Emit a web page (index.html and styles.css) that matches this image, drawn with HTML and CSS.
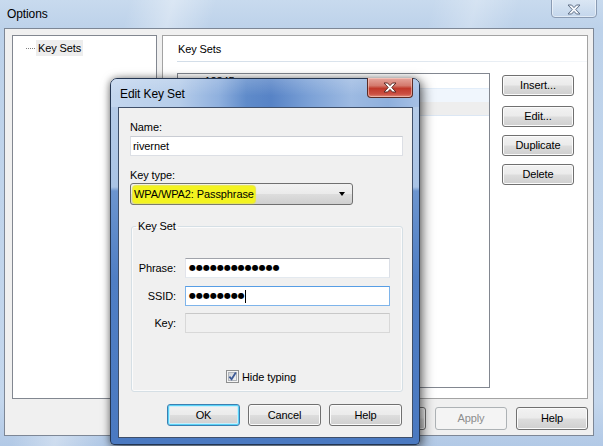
FILE: index.html
```html
<!DOCTYPE html>
<html>
<head>
<meta charset="utf-8">
<title>Options</title>
<link rel="stylesheet" href="styles.css">
</head>
<body>
<div class="win">
  <div class="win-title">
    <span class="win-caption">Options</span>
    <div class="cap-close cap-close-inactive">
      <svg width="14" height="11" viewBox="0 0 14 11"><path d="M1 1 H4.6 L7 3.6 L9.4 1 H13 L8.8 5.5 L13 10 H9.4 L7 7.4 L4.6 10 H1 L5.2 5.5 Z" fill="#f4f7fb" stroke="#5f6f86" stroke-width="1" stroke-linejoin="round"/></svg>
    </div>
  </div>
  <div class="win-body">
    <div class="client">
      <div class="panes">
        <div class="tree">
          <div class="tree-item"><span class="tree-dots"></span><span class="tree-label">Key Sets</span></div>
        </div>
        <div class="page">
          <div class="page-head">Key Sets</div>
          <div class="page-rule"></div>
          <div class="page-main">
            <div class="listbox">
              <div class="lrow">wep-12345</div>
              <div class="lrow lrow-hover"></div>
              <div class="lrow lrow-sel"></div>
            </div>
            <div class="side-btns">
              <button class="btn side-btn first">Insert...</button>
              <button class="btn side-btn">Edit...</button>
              <button class="btn side-btn">Duplicate</button>
              <button class="btn side-btn">Delete</button>
            </div>
          </div>
        </div>
      </div>
      <div class="footer">
        <button class="btn foot-btn" aria-label="OK"></button>
        <button class="btn foot-btn" aria-label="Cancel"></button>
        <button class="btn foot-btn btn-disabled">Apply</button>
        <button class="btn foot-btn">Help</button>
      </div>
    </div>
  </div>
</div>

<div class="dlg">
  <div class="dlg-title">
    <span class="dlg-caption">Edit Key Set</span>
    <div class="cap-close cap-close-red">
      <svg width="14" height="11" viewBox="0 0 14 11"><path d="M1 1 H4.6 L7 3.6 L9.4 1 H13 L8.8 5.5 L13 10 H9.4 L7 7.4 L4.6 10 H1 L5.2 5.5 Z" fill="#ffffff" stroke="#5a2a26" stroke-width="1" stroke-linejoin="round"/></svg>
    </div>
  </div>
  <div class="dlg-body">
    <div class="dlg-client">
      <div class="lbl">Name:</div>
      <div class="field field-name">rivernet</div>
      <div class="lbl lbl-gap">Key type:</div>
      <div class="combo">
        <span class="marker">WPA/WPA2: Passphrase</span>
        <span class="combo-arrow"></span>
      </div>
      <fieldset class="group">
        <legend class="group-legend">Key Set</legend>
        <div class="frow frow-first">
          <span class="flabel">Phrase:</span>
          <div class="field field-pw"><span class="dots">●●●●●●●●●●●●●</span></div>
        </div>
        <div class="frow">
          <span class="flabel">SSID:</span>
          <div class="field field-pw field-focus"><span class="dots">●●●●●●●●</span><span class="caret"></span></div>
        </div>
        <div class="frow">
          <span class="flabel">Key:</span>
          <div class="field field-pw field-disabled"></div>
        </div>
        <div class="check-row">
          <svg class="checkbox" width="13" height="13" viewBox="0 0 13 13">
            <defs><linearGradient id="cbg" x1="0" y1="0" x2="1" y2="1"><stop offset="0" stop-color="#cbcfd5"/><stop offset="1" stop-color="#f6f6f6"/></linearGradient></defs>
            <rect x="0.5" y="0.5" width="12" height="12" fill="#f4f4f4" stroke="#8e8f8f"/>
            <rect x="2.5" y="2.5" width="8" height="8" fill="url(#cbg)" stroke="#b1b5bb"/>
            <path d="M3.4 6.6 L5.6 9.3 L9.8 2.6" fill="none" stroke="#3d5a96" stroke-width="1.8"/>
          </svg>
          <span class="check-text">Hide typing</span>
        </div>
      </fieldset>
      <div class="dlg-footer">
        <button class="btn dlg-btn btn-default">OK</button>
        <button class="btn dlg-btn">Cancel</button>
        <button class="btn dlg-btn">Help</button>
      </div>
    </div>
  </div>
</div>
</body>
</html>
```

FILE: styles.css
```css
* { box-sizing: border-box; }

html, body {
  margin: 0;
  padding: 0;
  width: 603px;
  height: 446px;
  overflow: hidden;
}

body {
  position: relative;
  font-family: "Liberation Sans", Arial, sans-serif;
  font-size: 11px;
  letter-spacing: -0.1px;
  color: #000;
  background: #c3d6ec;
}

/* ---------- Options window ---------- */
.win {
  width: 603px;
  height: 446px;
  display: flex;
  flex-direction: column;
  background:
    linear-gradient(105deg, rgba(255,255,255,0) 18%, rgba(255,255,255,0.35) 24%, rgba(255,255,255,0) 30%, rgba(255,255,255,0) 60%, rgba(255,255,255,0.25) 66%, rgba(255,255,255,0) 72%),
    linear-gradient(to bottom, #c8daee 0, #bdd2ea 28px, #c4d7ed 400px, #b2c9e6 446px);
}

.win-title {
  height: 28px;
  display: flex;
  justify-content: space-between;
  align-items: flex-start;
  padding-left: 7px;
  padding-right: 6px;
}

.win-caption {
  margin-top: 6px;
  line-height: 16px;
  font-size: 12px;
}

.cap-close {
  width: 46px;
  height: 20px;
  margin-top: -2px;
  border-radius: 0 0 4px 4px;
  display: flex;
  align-items: center;
  justify-content: center;
}

.cap-close-inactive {
  border: 1px solid #8a9bb3;
  background: linear-gradient(to bottom, rgba(255,255,255,0.35), rgba(200,216,236,0.35));
  box-shadow: inset 0 0 0 1px rgba(255,255,255,0.5);
  padding-top: 2px;
}

.win-body {
  flex: 1;
  display: flex;
  padding: 0 9px 10px 4px;
}

.client {
  flex: 1;
  display: flex;
  flex-direction: column;
  border: 1px solid #7d8796;
  background: #f0f0f0;
  padding: 6px 5px 0 7px;
}

.panes {
  height: 364px;
  display: flex;
  gap: 5px;
}

.tree {
  width: 145px;
  border: 1px solid #828790;
  background: #fff;
}

.tree-item {
  margin-top: 4px;
  padding-left: 13px;
  display: flex;
  align-items: center;
  height: 16px;
}

.tree-dots {
  width: 10px;
  height: 1px;
  background: repeating-linear-gradient(to right, #7f7f7f 0 1px, transparent 1px 2px);
}

.tree-label {
  background: #ededed;
  padding: 0 2px;
  line-height: 16px;
  height: 16px;
}

.page {
  flex: 1;
  border: 1px solid #a3a3a3;
  background: #fff;
  display: flex;
  flex-direction: column;
}

.page-head {
  margin: 5px 0 0 15px;
  line-height: 16px;
  height: 16px;
}

.page-rule {
  margin: 4px 0 0 14px;
  height: 1px;
  background: linear-gradient(to right, #d2dde8, #dfe7ef 60%, #f4f7fa);
}

.page-main {
  margin: 11px 0 0 14px;
  display: flex;
}

.listbox {
  width: 313px;
  height: 315px;
  border: 1px solid #828790;
  background: #fff;
}

.lrow {
  height: 14px;
  line-height: 14px;
  padding-left: 3px;
}

.lrow-hover {
  background: #f0f6fd;
  border-top: 1px solid #e2edf9;
}

.lrow-sel {
  background: #eeeeee;
  border-bottom: 1px solid #dce7f4;
}

.side-btns {
  margin: 2px 0 0 12px;
  display: flex;
  flex-direction: column;
  gap: 8px;
}

.side-btn {
  width: 72px;
  height: 21px;
}

.side-btn.first {
  margin-bottom: 2px;
}

.footer {
  margin-top: 8px;
  display: flex;
  justify-content: flex-end;
  gap: 9px;
}

.foot-btn {
  width: 72px;
  height: 23px;
}

/* ---------- Buttons ---------- */
.btn {
  font-family: inherit;
  font-size: 11px;
  letter-spacing: inherit;
  color: #000;
  padding: 0;
  border: 1px solid #707070;
  border-radius: 3px;
  background: linear-gradient(to bottom, #f2f2f2 0%, #ebebeb 48%, #dddddd 52%, #cfcfcf 100%);
  box-shadow: inset 0 0 0 1px #fbfbfb;
  line-height: 1;
}

.btn-disabled {
  border-color: #adb2b5;
  background: #f4f4f4;
  box-shadow: none;
  color: #8d8d8d;
}

.btn-default {
  border-color: #3c7fb1;
  box-shadow: inset 0 0 0 1px #59d2f7, inset 0 0 0 2px #c9eefb;
}

/* ---------- Edit Key Set dialog ---------- */
.dlg {
  position: absolute;
  left: 110px;
  top: 78px;
  width: 310px;
  height: 367px;
  border: 1px solid #243652;
  border-radius: 7px 7px 4px 4px;
  display: flex;
  flex-direction: column;
  background: linear-gradient(to bottom, #b9cee9 0, #a9c3e5 108px, #6c95cf 112px, #4f7ec4 200px, #4a79c1 100%);
  box-shadow: 3px 3px 12px rgba(0,0,0,0.55), -1px 0 6px rgba(0,0,0,0.3);
}

.dlg-title {
  height: 28px;
  display: flex;
  justify-content: space-between;
  align-items: flex-start;
  padding-left: 9px;
  padding-right: 6px;
  border-radius: 6px 6px 0 0;
  background:
    linear-gradient(to bottom, rgba(255,255,255,0.18), rgba(255,255,255,0) 60%),
    linear-gradient(to right, #c3d6ee 0%, #b6cdea 22%, #8fb0de 35%, #5f8bca 44%, #5783c6 52%, #7aa0d6 64%, #9dbae2 78%, #8eafdc 90%, #a6c0e5 100%);
}

.dlg-caption {
  margin-top: 7px;
  line-height: 16px;
  font-size: 12px;
}

.cap-close-red {
  margin-top: -1px;
  height: 20px;
  border: 1px solid #5b2b25;
  border-top: none;
  border-radius: 0 0 4px 4px;
  background: linear-gradient(to bottom, #e6a69d 0%, #d47a6e 40%, #c0392b 55%, #cc5043 85%, #e08f7f 100%);
  box-shadow: inset 0 0 0 1px rgba(255,220,210,0.5);
}

.dlg-body {
  flex: 1;
  display: flex;
  padding: 0 6px 6px 7px;
}

.dlg-client {
  flex: 1;
  border: 1px solid #3f4f69;
  background: #f0f0f0;
  padding: 11px 9px 0 11px;
  display: flex;
  flex-direction: column;
}

.lbl {
  line-height: 16px;
  height: 16px;
}

.lbl-gap {
  margin-top: 11px;
}

.field {
  height: 20px;
  border: 1px solid #abadb3;
  border-top-color: #a0a3aa;
  border-bottom-color: #e3e9ef;
  border-left-color: #e2e3ea;
  border-right-color: #dbdfe6;
  background: #fff;
  display: flex;
  align-items: center;
  padding-left: 2px;
}

.field-name {
  margin-top: 1px;
  width: 273px;
  border-color: #dcdfe5;
  border-top-color: #c9ccd3;
}

.combo {
  width: 223px;
  height: 22px;
  border: 1px solid #707070;
  border-radius: 3px;
  background: linear-gradient(to bottom, #f2f2f2 0%, #ebebeb 48%, #dddddd 52%, #cfcfcf 100%);
  display: flex;
  align-items: center;
  padding-left: 2px;
  position: relative;
}

.marker {
  background: #f3f31f;
  padding: 1px 1px;
  border-radius: 3px;
  line-height: 15px;
  box-shadow: 0 0 1px 1px #e7e74a;
}

.combo-arrow {
  position: absolute;
  right: 7px;
  top: 8px;
  width: 0;
  height: 0;
  border-left: 3.5px solid transparent;
  border-right: 3.5px solid transparent;
  border-top: 4px solid #000;
}

.group {
  margin: 13px 0 0 1px;
  width: 272px;
  padding: 0;
  border: 1px solid #d5dfe5;
  border-radius: 3px;
  box-shadow: inset 0 0 0 1px #fbfbfb;
}

.group-legend {
  margin-left: 4px;
  padding: 0 2px;
  line-height: 16px;
}

.frow {
  display: flex;
  align-items: center;
  margin-top: 8px;
}

.frow-first {
  margin-top: 24px;
}

.frow + .frow + .frow {
  margin-top: 7px;
}

.flabel {
  width: 44px;
  text-align: right;
  margin-right: 9px;
}

.field-pw {
  width: 205px;
  padding-left: 3px;
}

.field-focus {
  border-color: #7eb4ea;
  border-top-color: #569de5;
}

.field-disabled {
  background: #f0f0f0;
  border-color: #d8d8d8;
  border-top-color: #c8c8c8;
}

.dots {
  font-family: "DejaVu Sans", sans-serif;
  font-size: 8px;
  letter-spacing: 0;
  line-height: 12px;
}

.caret {
  display: inline-block;
  width: 1px;
  height: 13px;
  background: #000;
  margin-left: 0;
}

.check-row {
  margin: 37px 0 8px 94px;
  display: flex;
  align-items: center;
  height: 13px;
}

.checkbox {
  display: block;
  flex: none;
}

.check-text {
  margin-left: 3px;
  line-height: 16px;
}

.dlg-footer {
  margin-top: 12px;
  display: flex;
  justify-content: flex-end;
  gap: 8px;
  padding-right: 1px;
}

.dlg-btn {
  width: 73px;
  height: 22px;
}
```
